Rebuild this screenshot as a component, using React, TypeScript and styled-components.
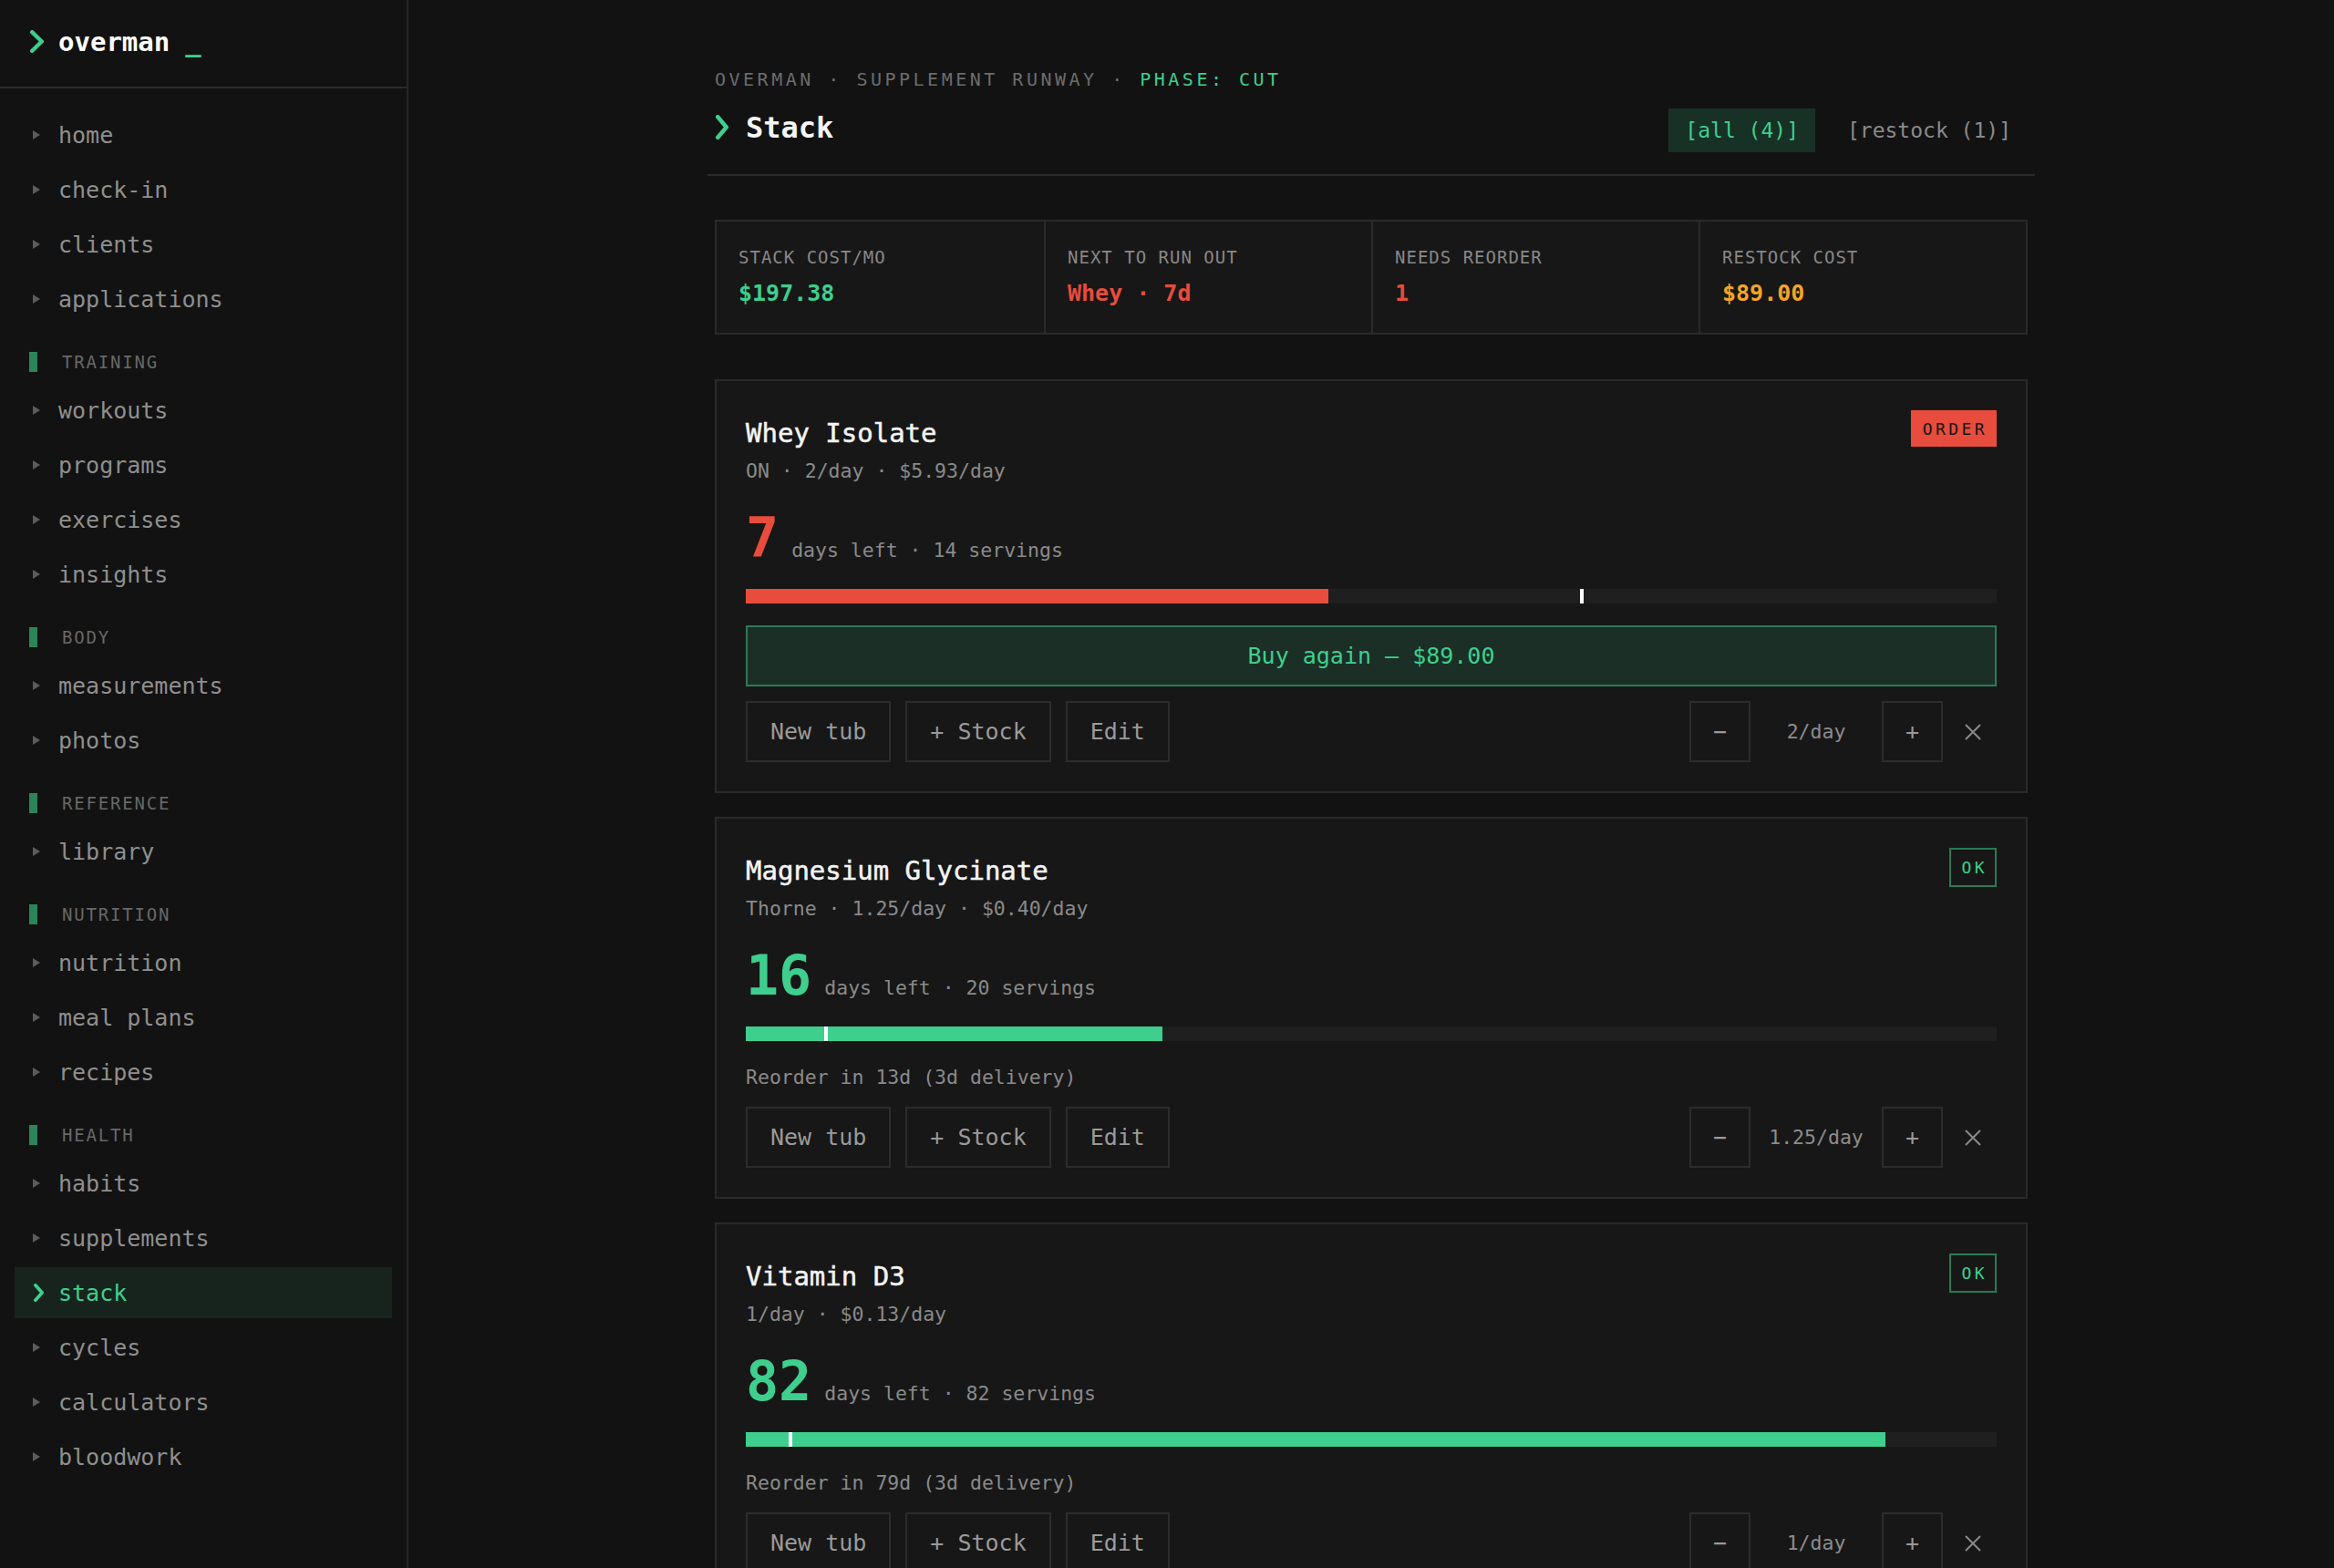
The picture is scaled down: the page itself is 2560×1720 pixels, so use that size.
import styled, { createGlobalStyle } from 'styled-components';

const GREEN = '#3ecf8e';
const RED = '#e74c3c';

const GlobalStyle = createGlobalStyle`
  html, body {
    margin: 0;
    padding: 0;
    background: #121212;
    font-family: 'DejaVu Sans Mono', 'Liberation Mono', monospace;
  }
  * {
    box-sizing: border-box;
  }
`;

type NavEntry = { label: string; section?: boolean; active?: boolean };

const nav: NavEntry[] = [
  { label: 'home' },
  { label: 'check-in' },
  { label: 'clients' },
  { label: 'applications' },
  { label: 'TRAINING', section: true },
  { label: 'workouts' },
  { label: 'programs' },
  { label: 'exercises' },
  { label: 'insights' },
  { label: 'BODY', section: true },
  { label: 'measurements' },
  { label: 'photos' },
  { label: 'REFERENCE', section: true },
  { label: 'library' },
  { label: 'NUTRITION', section: true },
  { label: 'nutrition' },
  { label: 'meal plans' },
  { label: 'recipes' },
  { label: 'HEALTH', section: true },
  { label: 'habits' },
  { label: 'supplements' },
  { label: 'stack', active: true },
  { label: 'cycles' },
  { label: 'calculators' },
  { label: 'bloodwork' },
];

type Supp = {
  name: string;
  meta: string;
  days: number;
  servings: number;
  fill: number;
  marker: number;
  status: 'order' | 'ok';
  dose: string;
  note?: string;
  buy?: string;
};

const stack: Supp[] = [
  {
    name: 'Whey Isolate',
    meta: 'ON · 2/day · $5.93/day',
    days: 7,
    servings: 14,
    fill: 46.6,
    marker: 66.7,
    status: 'order',
    dose: '2/day',
    buy: '$89.00',
  },
  {
    name: 'Magnesium Glycinate',
    meta: 'Thorne · 1.25/day · $0.40/day',
    days: 16,
    servings: 20,
    fill: 33.3,
    marker: 6.3,
    status: 'ok',
    dose: '1.25/day',
    note: 'Reorder in 13d (3d delivery)',
  },
  {
    name: 'Vitamin D3',
    meta: '1/day · $0.13/day',
    days: 82,
    servings: 82,
    fill: 91.1,
    marker: 3.4,
    status: 'ok',
    dose: '1/day',
    note: 'Reorder in 79d (3d delivery)',
  },
  {
    name: 'Creatine Monohydrate',
    meta: 'Bulk · 1/day · $0.12/day',
    days: 54,
    servings: 54,
    fill: 60,
    marker: 5,
    status: 'ok',
    dose: '1/day',
    note: 'Reorder in 51d (3d delivery)',
  },
];

const Chevron = ({ w, h, sw }: { w: number; h: number; sw: number }) => (
  <svg width={w} height={h} viewBox={`0 0 ${w} ${h}`} fill="none">
    <polyline
      points={`${sw / 2 + 1},${sw / 2} ${w - sw / 2 - 1},${h / 2} ${sw / 2 + 1},${h - sw / 2}`}
      stroke={GREEN}
      strokeWidth={sw}
      strokeLinecap="round"
      strokeLinejoin="round"
    />
  </svg>
);

const App = () => {
  return (
    <Shell>
      <GlobalStyle />
      <Sidebar>
        <Brand>
          <Chevron w={17} h={25} sw={4.5} />
          <BrandName>overman</BrandName>
          <Cursor>_</Cursor>
        </Brand>
        <Nav>
          {nav.map(n =>
            n.section ? (
              <SectionLabel key={n.label}>
                <SectionBar />
                {n.label}
              </SectionLabel>
            ) : (
              <NavItem key={n.label} $active={n.active}>
                <NavIcon>
                  {n.active ? (
                    <Chevron w={13} h={20} sw={3.6} />
                  ) : (
                    <svg width="8" height="10" viewBox="0 0 8 10">
                      <polygon points="0,0 8,5 0,10" fill="#5c5c5c" />
                    </svg>
                  )}
                </NavIcon>
                {n.label}
              </NavItem>
            )
          )}
        </Nav>
      </Sidebar>
      <Main>
        <Content>
          <Header>
            <Crumbs>
              OVERMAN · SUPPLEMENT RUNWAY · <Phase>PHASE: CUT</Phase>
            </Crumbs>
            <TitleRow>
              <PageTitle>
                <Chevron w={16} h={27} sw={4.5} />
                Stack
              </PageTitle>
              <Filters>
                <FilterBtn $on>[all (4)]</FilterBtn>
                <FilterBtn>[restock (1)]</FilterBtn>
              </Filters>
            </TitleRow>
          </Header>

          <Stats>
            <StatCell>
              <StatLabel>STACK COST/MO</StatLabel>
              <StatValue $color={GREEN}>$197.38</StatValue>
            </StatCell>
            <StatCell>
              <StatLabel>NEXT TO RUN OUT</StatLabel>
              <StatValue $color={RED}>Whey · 7d</StatValue>
            </StatCell>
            <StatCell>
              <StatLabel>NEEDS REORDER</StatLabel>
              <StatValue $color={RED}>1</StatValue>
            </StatCell>
            <StatCell>
              <StatLabel>RESTOCK COST</StatLabel>
              <StatValue $color="#f5a524">$89.00</StatValue>
            </StatCell>
          </Stats>

          <CardList>
            {stack.map(s => {
              const tone = s.status === 'order' ? RED : GREEN;
              return (
                <Card key={s.name}>
                  <CardTop>
                    <CardHead>
                      <CardTitle>{s.name}</CardTitle>
                      <CardMeta>{s.meta}</CardMeta>
                    </CardHead>
                    <Badge $kind={s.status}>{s.status === 'order' ? 'ORDER' : 'OK'}</Badge>
                  </CardTop>
                  <DaysRow>
                    <DaysNum $color={tone}>{s.days}</DaysNum>
                    <DaysText>days left · {s.servings} servings</DaysText>
                  </DaysRow>
                  <Track>
                    <Fill $color={tone} style={{ width: `${s.fill}%` }} />
                    <Marker style={{ left: `${s.marker}%` }} />
                  </Track>
                  {s.buy ? (
                    <BuyBtn>Buy again — {s.buy}</BuyBtn>
                  ) : (
                    <Note>{s.note}</Note>
                  )}
                  <Actions>
                    <ActionGroup>
                      <GhostBtn>New tub</GhostBtn>
                      <GhostBtn>+ Stock</GhostBtn>
                      <GhostBtn>Edit</GhostBtn>
                    </ActionGroup>
                    <ActionGroup>
                      <StepBtn>−</StepBtn>
                      <Dose>{s.dose}</Dose>
                      <StepBtn>+</StepBtn>
                      <RemoveBtn>
                        <svg width="18" height="18" viewBox="0 0 18 18">
                          <path d="M1 1 L17 17 M17 1 L1 17" stroke="#8a8a8a" strokeWidth="2" />
                        </svg>
                      </RemoveBtn>
                    </ActionGroup>
                  </Actions>
                </Card>
              );
            })}
          </CardList>
        </Content>
      </Main>
    </Shell>
  );
};

export default App;

const Shell = styled.div`
  display: flex;
  height: 100vh;
  overflow: hidden;
  background: #121212;
`;

const Sidebar = styled.aside`
  width: 448px;
  flex-shrink: 0;
  height: 100%;
  border-right: 2px solid #262626;
  display: flex;
  flex-direction: column;
`;

const Brand = styled.div`
  height: 97px;
  border-bottom: 2px solid #2c2c2c;
  display: flex;
  align-items: center;
  padding: 0 0 4px 32px;
  > svg {
    margin-right: 15px;
  }
`;

const BrandName = styled.span`
  font-size: 29px;
  font-weight: bold;
  color: #ffffff;
`;

const Cursor = styled.span`
  font-size: 29px;
  font-weight: bold;
  color: ${GREEN};
  margin-left: 17px;
`;

const Nav = styled.nav`
  display: flex;
  flex-direction: column;
  padding: 23px 16px 0;
`;

const NavItem = styled.div<{ $active?: boolean }>`
  display: flex;
  align-items: center;
  height: 56px;
  margin-bottom: 4px;
  padding-left: 17px;
  font-size: 25px;
  color: ${p => (p.$active ? GREEN : '#8f8f8f')};
  background: ${p => (p.$active ? '#17241d' : 'transparent')};
`;

const NavIcon = styled.span`
  width: 31px;
  display: flex;
  align-items: center;
  padding-left: 3px;
`;

const SectionLabel = styled.div`
  display: flex;
  align-items: center;
  padding: 26px 0 14px 16px;
  line-height: 22px;
  font-size: 19px;
  letter-spacing: 1.8px;
  color: #686868;
`;

const SectionBar = styled.span`
  width: 9px;
  height: 22px;
  background: #2b8559;
  margin-right: 27px;
`;

const Main = styled.main`
  flex: 1;
  height: 100%;
  overflow-y: auto;
  scrollbar-width: none;
  &::-webkit-scrollbar {
    display: none;
  }
`;

const Content = styled.div`
  width: 1440px;
  margin: 0 auto;
  padding: 75px 0 80px;
`;

const Header = styled.header`
  margin: 0 -8px;
  padding: 0 8px 24px;
  border-bottom: 2px solid #2a2a2a;
`;

const Crumbs = styled.div`
  font-size: 20px;
  line-height: 24px;
  letter-spacing: 3.5px;
  color: #6c6c6c;
`;

const Phase = styled.span`
  color: ${GREEN};
`;

const TitleRow = styled.div`
  display: flex;
  align-items: center;
  justify-content: space-between;
  margin-top: 20px;
  height: 48px;
`;

const PageTitle = styled.h1`
  margin: -7px 0 0;
  display: flex;
  align-items: center;
  gap: 18px;
  font-size: 32px;
  font-weight: bold;
  color: #f5f5f5;
`;

const Filters = styled.div`
  display: flex;
  gap: 17px;
`;

const FilterBtn = styled.button<{ $on?: boolean }>`
  height: 48px;
  padding: 0 18px;
  border: none;
  font-family: inherit;
  font-size: 23px;
  background: ${p => (p.$on ? '#173126' : 'transparent')};
  color: ${p => (p.$on ? GREEN : '#8a8a8a')};
`;

const Stats = styled.section`
  margin-top: 48px;
  display: grid;
  grid-template-columns: repeat(4, 1fr);
  border: 2px solid #2a2a2a;
  background: #171717;
`;

const StatCell = styled.div`
  padding: 27px 24px;
  & + & {
    border-left: 2px solid #2a2a2a;
  }
`;

const StatLabel = styled.div`
  font-size: 19px;
  line-height: 24px;
  letter-spacing: 1px;
  color: #888888;
`;

const StatValue = styled.div<{ $color: string }>`
  margin-top: 12px;
  font-size: 25px;
  line-height: 32px;
  font-weight: bold;
  color: ${p => p.$color};
`;

const CardList = styled.div`
  margin-top: 49px;
  display: flex;
  flex-direction: column;
  gap: 26px;
`;

const Card = styled.article`
  border: 2px solid #2a2a2a;
  background: #171717;
  padding: 32px;
`;

const CardTop = styled.div`
  display: flex;
  justify-content: space-between;
  align-items: flex-start;
`;

const CardHead = styled.div`
  padding-top: 3px;
`;

const CardTitle = styled.div`
  font-size: 29px;
  line-height: 44px;
  color: #f4f4f4;
  -webkit-text-stroke: 0.5px #f4f4f4;
`;

const CardMeta = styled.div`
  margin-top: 5px;
  font-size: 21.5px;
  line-height: 30px;
  color: #8a8a8a;
`;

const Badge = styled.span<{ $kind: 'order' | 'ok' }>`
  display: flex;
  align-items: center;
  height: ${p => (p.$kind === 'order' ? '40px' : '43px')};
  padding: ${p => (p.$kind === 'order' ? '0 10px 0 13px' : '0 8px 0 12px')};
  font-size: 18px;
  letter-spacing: 3.4px;
  background: ${p => (p.$kind === 'order' ? RED : 'transparent')};
  color: ${p => (p.$kind === 'order' ? '#161616' : GREEN)};
  border: ${p => (p.$kind === 'order' ? 'none' : '2px solid #2a7a55')};
`;

const DaysRow = styled.div`
  margin-top: 28px;
  display: flex;
  align-items: baseline;
  gap: 14px;
`;

const DaysNum = styled.span<{ $color: string }>`
  font-size: 60px;
  line-height: 60px;
  font-weight: bold;
  color: ${p => p.$color};
`;

const DaysText = styled.span`
  font-size: 21.5px;
  color: #8a8a8a;
`;

const Track = styled.div`
  position: relative;
  margin-top: 26px;
  height: 16px;
  background: #1f1f1f;
`;

const Fill = styled.div<{ $color: string }>`
  height: 100%;
  background: ${p => p.$color};
`;

const Marker = styled.span`
  position: absolute;
  top: 0;
  width: 4px;
  height: 100%;
  background: #ffffff;
`;

const BuyBtn = styled.button`
  display: block;
  width: 100%;
  margin-top: 24px;
  height: 67px;
  background: #1b2f27;
  border: 2px solid #2c7a56;
  color: ${GREEN};
  font-family: inherit;
  font-size: 25px;
`;

const Note = styled.div`
  margin-top: 24px;
  font-size: 21.5px;
  line-height: 32px;
  color: #8a8a8a;
`;

const Actions = styled.div`
  margin-top: 16px;
  display: flex;
  justify-content: space-between;
  align-items: center;
`;

const ActionGroup = styled.div`
  display: flex;
  align-items: center;
  gap: 16px;
`;

const GhostBtn = styled.button`
  height: 67px;
  padding: 0 25px;
  background: transparent;
  border: 2px solid #2c2c2c;
  color: #9a9a9a;
  font-family: inherit;
  font-size: 25px;
`;

const StepBtn = styled.button`
  width: 67px;
  height: 67px;
  background: transparent;
  border: 2px solid #2c2c2c;
  color: #9a9a9a;
  font-family: inherit;
  font-size: 25px;
  padding: 0;
`;

const Dose = styled.span`
  width: 112px;
  text-align: center;
  font-size: 21.5px;
  color: #8c8c8c;
`;

const RemoveBtn = styled.button`
  width: 34px;
  height: 34px;
  margin-right: 9px;
  padding: 0;
  display: flex;
  align-items: center;
  justify-content: center;
  background: transparent;
  border: none;
`;
